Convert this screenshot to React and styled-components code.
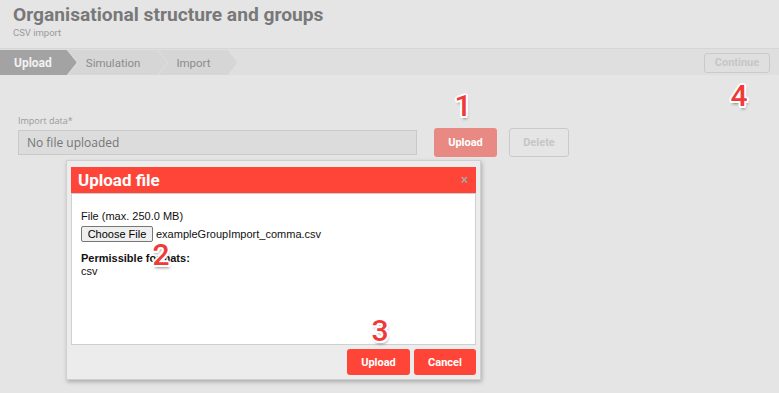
import React from "react";
import styled, { createGlobalStyle } from "styled-components";

const Global = createGlobalStyle`
  html, body { margin: 0; padding: 0; background: #e5e5e5; }
  body { font-family: Roboto, "Liberation Sans", Arial, sans-serif; }
  * { box-sizing: border-box; }
`;

const Page = styled.div`
  position: relative;
  width: 779px;
  min-height: 393px;
  overflow: hidden;
  background: #e5e5e5;
`;

const Header = styled.header`
  height: 49px;
  padding: 3px 13px 0;
  border-bottom: 1px solid #d6d6d6;
`;

const Title = styled.h1`
  margin: 0;
  font-family: Roboto, sans-serif;
  font-weight: 700;
  font-size: 19.2px;
  line-height: 24px;
  color: #787878;
`;

const Subtitle = styled.div`
  font-family: Roboto, sans-serif;
  font-size: 9.5px;
  line-height: 12px;
  color: #9a9a9a;
`;

const StepBar = styled.nav`
  height: 26px;
  padding-top: 1px;
  background: #dfdfdf;
  display: flex;
  align-items: stretch;
  justify-content: space-between;
`;

const Steps = styled.div`
  display: flex;
`;

const Step = styled.div`
  display: flex;
  align-items: center;
  height: 25px;
  font-family: Roboto, sans-serif;
  font-size: ${(p) => (p.$active ? "12px" : "11.5px")};
  font-weight: ${(p) => (p.$active ? 700 : 400)};
  color: ${(p) => (p.$active ? "#f2f2f2" : "#8b8b8b")};
  background: ${(p) => (p.$active ? "#a3a3a3" : "#d6d6d6")};
  padding: ${(p) => (p.$first ? "0 25px 0 14px" : "0 27px 0 18px")};
  margin-left: ${(p) => (p.$first ? "0" : "-9px")};
  clip-path: ${(p) =>
    p.$first
      ? "polygon(0 0, calc(100% - 10px) 0, 100% 50%, calc(100% - 10px) 100%, 0 100%)"
      : "polygon(0 0, calc(100% - 10px) 0, 100% 50%, calc(100% - 10px) 100%, 0 100%, 10px 50%)"};
`;

const GhostButton = styled.button`
  align-self: center;
  width: ${(p) => p.$w}px;
  height: ${(p) => p.$h}px;
  margin-right: ${(p) => p.$mr || 0}px;
  margin-left: ${(p) => p.$ml || 0}px;
  border: 1px solid #cacaca;
  border-radius: 3px;
  background: transparent;
  color: #c6c6c6;
  font-family: Roboto, sans-serif;
  font-weight: 700;
  font-size: 11px;
  padding: 0;
`;

const Content = styled.main`
  padding: 40px 18px 0;
`;

const Label = styled.div`
  font-family: "Open Sans", sans-serif;
  font-size: 9px;
  line-height: 12px;
  color: #999;
  margin-bottom: 1px;
`;

const FieldRow = styled.div`
  display: flex;
  align-items: center;
`;

const FakeInput = styled.div`
  width: 399px;
  height: 25px;
  border: 1px solid #c9c9c9;
  background: #dcdcdc;
  display: flex;
  align-items: center;
  padding-left: 8px;
  font-family: "Open Sans", sans-serif;
  font-size: 12px;
  color: #757575;
`;

const RedButton = styled.button`
  width: ${(p) => p.$w}px;
  height: ${(p) => p.$h}px;
  margin-left: ${(p) => p.$ml || 0}px;
  border: none;
  border-radius: 3px;
  background: ${(p) => (p.$faded ? "#e88a83" : "#ff4538")};
  color: #fff;
  font-family: Roboto, sans-serif;
  font-weight: 700;
  font-size: 11px;
  padding: 0;
`;

const Modal = styled.div`
  position: absolute;
  left: 66px;
  top: 160px;
  width: 415px;
  background: #ececec;
  border: 1px solid #d0d0d0;
  box-shadow: 1px 2px 4px rgba(0, 0, 0, 0.25);
  padding: 6px 4px 4px;
  display: flex;
  flex-direction: column;
`;

const ModalHeader = styled.div`
  height: 26px;
  background: #ff4538;
  display: flex;
  align-items: center;
  justify-content: space-between;
  padding: 0 8px 0 7px;
`;

const ModalTitle = styled.div`
  font-family: Roboto, sans-serif;
  font-weight: 700;
  font-size: 17px;
  color: #fff;
`;

const Close = styled.span`
  font-family: "Liberation Sans", Arial, sans-serif;
  font-weight: 700;
  font-size: 12px;
  color: #a7a7a7;
`;

const ModalBody = styled.div`
  height: 152px;
  background: #fff;
  border: 1px solid #cfcfcf;
  padding: 16px 9px 0;
  font-family: "Liberation Sans", Arial, sans-serif;
  font-size: 11px;
  line-height: 13px;
  color: #111;
`;

const FileRow = styled.div`
  display: flex;
  align-items: center;
  gap: 3px;
  margin-top: 3px;
`;

const NativeButton = styled.button`
  width: 72px;
  height: 16px;
  padding: 0;
  border: 1px solid #767676;
  border-radius: 2px;
  background: #efefef;
  font-family: "Liberation Sans", Arial, sans-serif;
  font-size: 11px;
  color: #000;
`;

const Strong = styled.div`
  font-weight: 700;
  margin-top: 10px;
`;

const Footer = styled.div`
  display: flex;
  justify-content: flex-end;
  gap: 4px;
  padding-top: 4px;
`;

const Marker = styled.div`
  position: absolute;
  left: ${(p) => p.$x}px;
  top: ${(p) => p.$y}px;
  transform: translate(-50%, -50%);
  font-family: Roboto, sans-serif;
  font-weight: 500;
  font-size: 30px;
  line-height: 30px;
  color: #f03a3a;
  text-shadow: 2px 0 0 #fff, -2px 0 0 #fff, 0 2px 0 #fff, 0 -2px 0 #fff,
    1.5px 1.5px 0 #fff, -1.5px 1.5px 0 #fff, 1.5px -1.5px 0 #fff,
    -1.5px -1.5px 0 #fff, 1px 3px 3px rgba(0, 0, 0, 0.45);
`;

export default function App() {
  return (
    <Page>
      <Global />
      <Header>
        <Title>Organisational structure and groups</Title>
        <Subtitle>CSV import</Subtitle>
      </Header>
      <StepBar>
        <Steps>
          <Step $first $active>Upload</Step>
          <Step>Simulation</Step>
          <Step>Import</Step>
        </Steps>
        <GhostButton $w={66} $h={20} $mr={9}>Continue</GhostButton>
      </StepBar>
      <Content>
        <Label>Import data*</Label>
        <FieldRow>
          <FakeInput>No file uploaded</FakeInput>
          <RedButton $faded $w={63} $h={29} $ml={17}>Upload</RedButton>
          <GhostButton $w={60} $h={29} $ml={12}>Delete</GhostButton>
        </FieldRow>
      </Content>

      <Modal>
        <ModalHeader>
          <ModalTitle>Upload file</ModalTitle>
          <Close>×</Close>
        </ModalHeader>
        <ModalBody>
          <div>File (max. 250.0 MB)</div>
          <FileRow>
            <NativeButton>Choose File</NativeButton>
            <span>exampleGroupImport_comma.csv</span>
          </FileRow>
          <Strong>Permissible formats:</Strong>
          <div>csv</div>
        </ModalBody>
        <Footer>
          <RedButton $w={63} $h={26}>Upload</RedButton>
          <RedButton $w={62} $h={26}>Cancel</RedButton>
        </Footer>
      </Modal>

      <Marker $x={463} $y={106}>1</Marker>
      <Marker $x={161} $y={255}>2</Marker>
      <Marker $x={380} $y={331}>3</Marker>
      <Marker $x={739} $y={96}>4</Marker>
    </Page>
  );
}
